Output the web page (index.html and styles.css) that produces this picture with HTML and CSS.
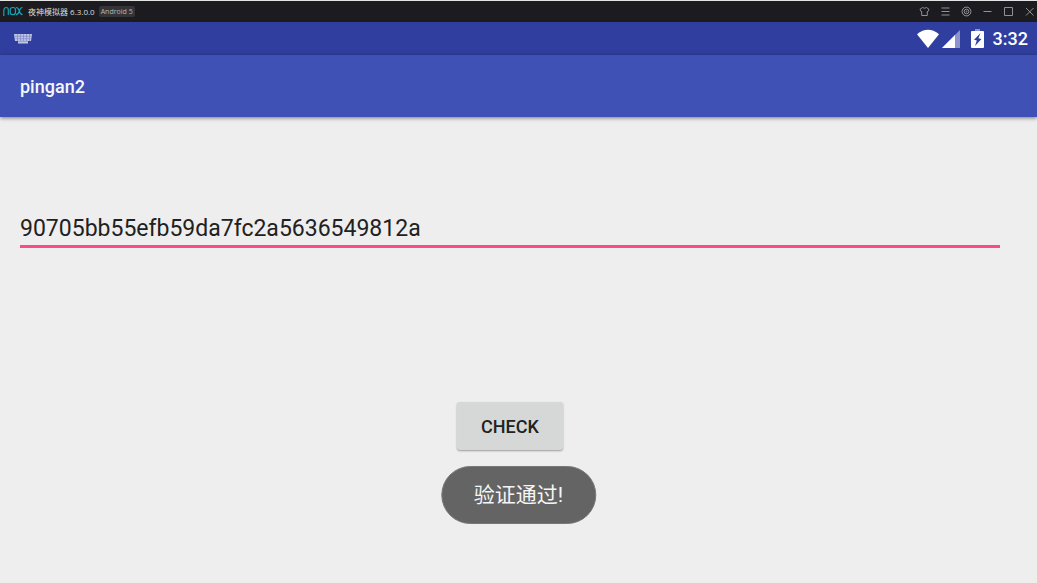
FILE: index.html
```html
<!DOCTYPE html>
<html lang="en">
<head>
<meta charset="utf-8">
<title>pingan2</title>
<link rel="stylesheet" href="styles.css">
</head>
<body>
<header class="titlebar">
  <svg class="logo" width="20" height="11" viewBox="0 0 20 11" fill="none" stroke="#12a5b5" stroke-width="1.2" role="img" aria-label="nox">
    <path d="M.8 10V5Q.8 1.500 3.300 1.500Q5.300 1.500 5.300 4V9"/>
    <rect x="7.200" y="1.500" width="5.300" height="7.200" rx="2.400"/>
    <path d="M13 1.500Q15.300 1.500 16.300 5Q17.300 8.700 19.500 8.700M19.500 1.500Q17.300 1.500 16.300 5Q15.300 8.700 13 8.700"/>
  </svg>
  <span class="app-name">夜神模拟器 6.3.0.0</span>
  <span class="tag">Android 5</span>
  <div class="window-buttons">
    <button class="win" aria-label="Theme"><svg width="11" height="11" viewBox="0 0 11 11"><path d="M3.500 1.500Q5.500 3 7.500 1.500L10 3.300L9 5.500H8.300V9.500H2.700V5.500H2L1 3.300Z"/></svg></button>
    <button class="win" aria-label="Menu"><svg width="11" height="11" viewBox="0 0 11 11"><path d="M1.500 2H9.500M1.500 5.500H9.500M1.500 9H9.500"/></svg></button>
    <button class="win" aria-label="Settings"><svg width="11" height="11" viewBox="0 0 11 11"><path d="M4 1.200H7L9.200 3L10 5.500L9.200 8L7 9.800H4L1.800 8L1 5.500L1.800 3Z"/><circle cx="5.500" cy="5.500" r="2.300"/><circle cx="5.500" cy="5.500" r=".5"/></svg></button>
    <button class="win" aria-label="Minimize"><svg width="11" height="11" viewBox="0 0 11 11"><path d="M1.500 5.500H9.500"/></svg></button>
    <button class="win" aria-label="Maximize"><svg width="11" height="11" viewBox="0 0 11 11"><path d="M1.500 1.500H9.500V9.500H1.500Z"/></svg></button>
    <button class="win" aria-label="Close"><svg width="11" height="11" viewBox="0 0 11 11"><path d="M2 2L9.500 9.500M9.500 2L2 9.500"/></svg></button>
  </div>
</header>
<div class="statusbar">
  <svg width="20" height="12" viewBox="0 0 20 12" fill="#c0c5e6">
    <path d="M1 1H19L18 8H15V10.500H5V8H2Z"/>
    <path d="M2 3.300H18M2.500 5.700H17.500M4.500 1V8M7.500 1V8M10.500 1V8M13.500 1V8M16.500 1V8M5 8.300H15" stroke="#303f9f" stroke-width=".6" opacity=".5"/>
  </svg>
  <div class="status-icons">
    <svg width="24" height="20" viewBox="0 0 24 20"><path d="M1 5.200Q12-3.500 23 5.200L12 19Z" fill="#fff"/></svg>
    <svg width="19" height="20" viewBox="0 0 19 20"><path d="M0 19L18 1V19Z" fill="#8c94cb"/><path d="M0 19L13 6V19Z" fill="#fff"/></svg>
    <svg class="battery" width="13" height="20" viewBox="0 0 13 20"><path d="M4 0H9V2H4Z" fill="#8c94cb"/><path d="M1 2H12Q13 2 13 3V18Q13 19 12 19H1Q0 19 0 18V3Q0 2 1 2Z" fill="#fff"/><path d="M9.500 4L3 10.800L5.800 11.500L4 17L10.500 10L7.400 9.200Z" fill="#303f9f"/></svg>
    <span class="clock">3:32</span>
  </div>
</div>
<div class="appbar"><h1 class="title">pingan2</h1></div>
<main class="content">
  <input class="field" type="text" aria-label="Code" value="90705bb55efb59da7fc2a5636549812a">
  <button class="check">CHECK</button>
</main>
<div class="toast" role="status">验证通过!</div>
</body>
</html>
```
FILE: styles.css
```css
* { box-sizing: border-box; }
body {
  margin: 0;
  min-height: 100vh;
  background: #eee;
  font-family: Roboto, "Noto Sans CJK SC", sans-serif;
}
.titlebar {
  display: flex;
  align-items: center;
  height: 22px;
  padding-left: 3px;
  border-top: 1px solid #e4e4e4;
  background: #1c1c20;
  color: #dcdcdc;
  font-size: 8px;
  white-space: nowrap;
}
.app-name {
  margin-left: 5px;
  font-family: "Open Sans", "Noto Sans CJK SC", sans-serif;
}
.tag {
  margin-left: 4px;
  padding: 0 2px;
  border-radius: 2px;
  background: #343438;
  color: #b5b5b5;
  font: 7px/11px "Open Sans", sans-serif;
}
.window-buttons {
  display: flex;
  gap: 10px;
  margin-left: auto;
  padding-right: 2px;
}
.win {
  display: flex;
  padding: 0;
  border: 0;
  background: none;
}
.win svg {
  fill: none;
  stroke: #929295;
  stroke-width: 1;
}
.statusbar {
  display: flex;
  align-items: center;
  justify-content: space-between;
  height: 33px;
  padding: 0 9px 0 13px;
  background: #303f9f;
}
.status-icons {
  display: flex;
  align-items: center;
  gap: 2px;
}
.battery { margin: 0 7px 0 8px; }
.clock {
  color: #fff;
  font-size: 18px;
  font-weight: 500;
}
.appbar {
  display: flex;
  align-items: center;
  height: 62px;
  padding: 0 20px;
  background: #3f51b5;
  box-shadow: 0 1px 4px rgba(0, 0, 0, .5);
}
.title {
  margin: 0;
  color: #f6f7fc;
  font-size: 18px;
  font-weight: 500;
}
.content {
  display: flex;
  flex-direction: column;
  align-items: center;
  padding: 91px 37px 0 20px;
}
.field {
  width: 100%;
  height: 40px;
  padding: 3px 0 0;
  border: 0;
  border-bottom: 3px solid #fc4a86;
  outline: 0;
  background: none;
  color: #212121;
  font: 23px Roboto, sans-serif;
}
.check {
  width: 106px;
  height: 48px;
  margin-top: 154px;
  border: 0;
  border-radius: 3px;
  background: #d6d8d7;
  box-shadow: 0 1px 2px rgba(0, 0, 0, .35);
  color: #212121;
  font: 500 18px Roboto, sans-serif;
}
.toast {
  position: fixed;
  bottom: 59px;
  left: 50%;
  padding: 1px 32px 0;
  border: 1px solid #777;
  border-radius: 29px;
  background: #646464;
  color: #f5f5f5;
  font-size: 21px;
  line-height: 55px;
  white-space: nowrap;
  transform: translateX(-50%);
}
```
